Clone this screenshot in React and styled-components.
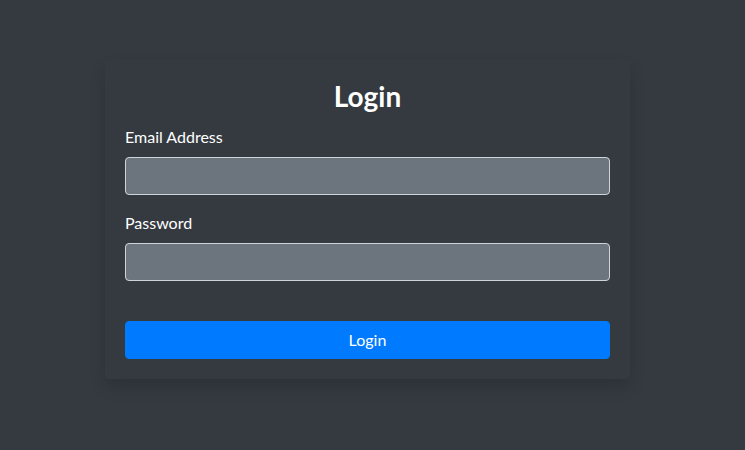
import styled, { createGlobalStyle } from "styled-components";

const GlobalStyle = createGlobalStyle`
  html, body {
    margin: 0;
    background: #343a40;
    font-family: "Segoe UI", Lato, "Liberation Sans", sans-serif;
  }
`;

const Page = styled.div`
  min-height: 450px;
  padding: 60px 10px 0 0;
  box-sizing: border-box;
`;

const Card = styled.form`
  width: 525px;
  margin: 0 auto;
  padding: 20px;
  box-sizing: border-box;
  background: #343a40;
  border-radius: 4px;
  box-shadow: 0 8px 16px rgba(0, 0, 0, 0.15);
  display: flex;
  flex-direction: column;
`;

const Title = styled.h2`
  margin: 0 0 11px;
  text-align: center;
  color: #fff;
  font-size: 28px;
  font-weight: 700;
  line-height: 1.2;
`;

const Group = styled.div`
  display: flex;
  flex-direction: column;
  margin-bottom: ${(p) => (p.last ? "40px" : "16px")};
`;

const Label = styled.label`
  color: #fff;
  font-size: 16px;
  line-height: 24px;
  margin-bottom: 8px;
`;

const Input = styled.input`
  height: 38px;
  box-sizing: border-box;
  background: #6c757d;
  border: 1px solid #ced4da;
  border-radius: 4px;
  padding: 6px 12px;
  color: #fff;
  font-size: 16px;
  font-family: inherit;
  outline: none;
`;

const Button = styled.button`
  height: 38px;
  background: #007bff;
  border: 1px solid #007bff;
  border-radius: 4px;
  color: #fff;
  font-size: 16px;
  font-family: inherit;
  cursor: pointer;
`;

export default function App() {
  return (
    <>
      <GlobalStyle />
      <Page>
        <Card onSubmit={(e) => e.preventDefault()}>
          <Title>Login</Title>
          <Group>
            <Label htmlFor="email">Email Address</Label>
            <Input id="email" type="email" />
          </Group>
          <Group last>
            <Label htmlFor="password">Password</Label>
            <Input id="password" type="password" />
          </Group>
          <Button type="submit">Login</Button>
        </Card>
      </Page>
    </>
  );
}
